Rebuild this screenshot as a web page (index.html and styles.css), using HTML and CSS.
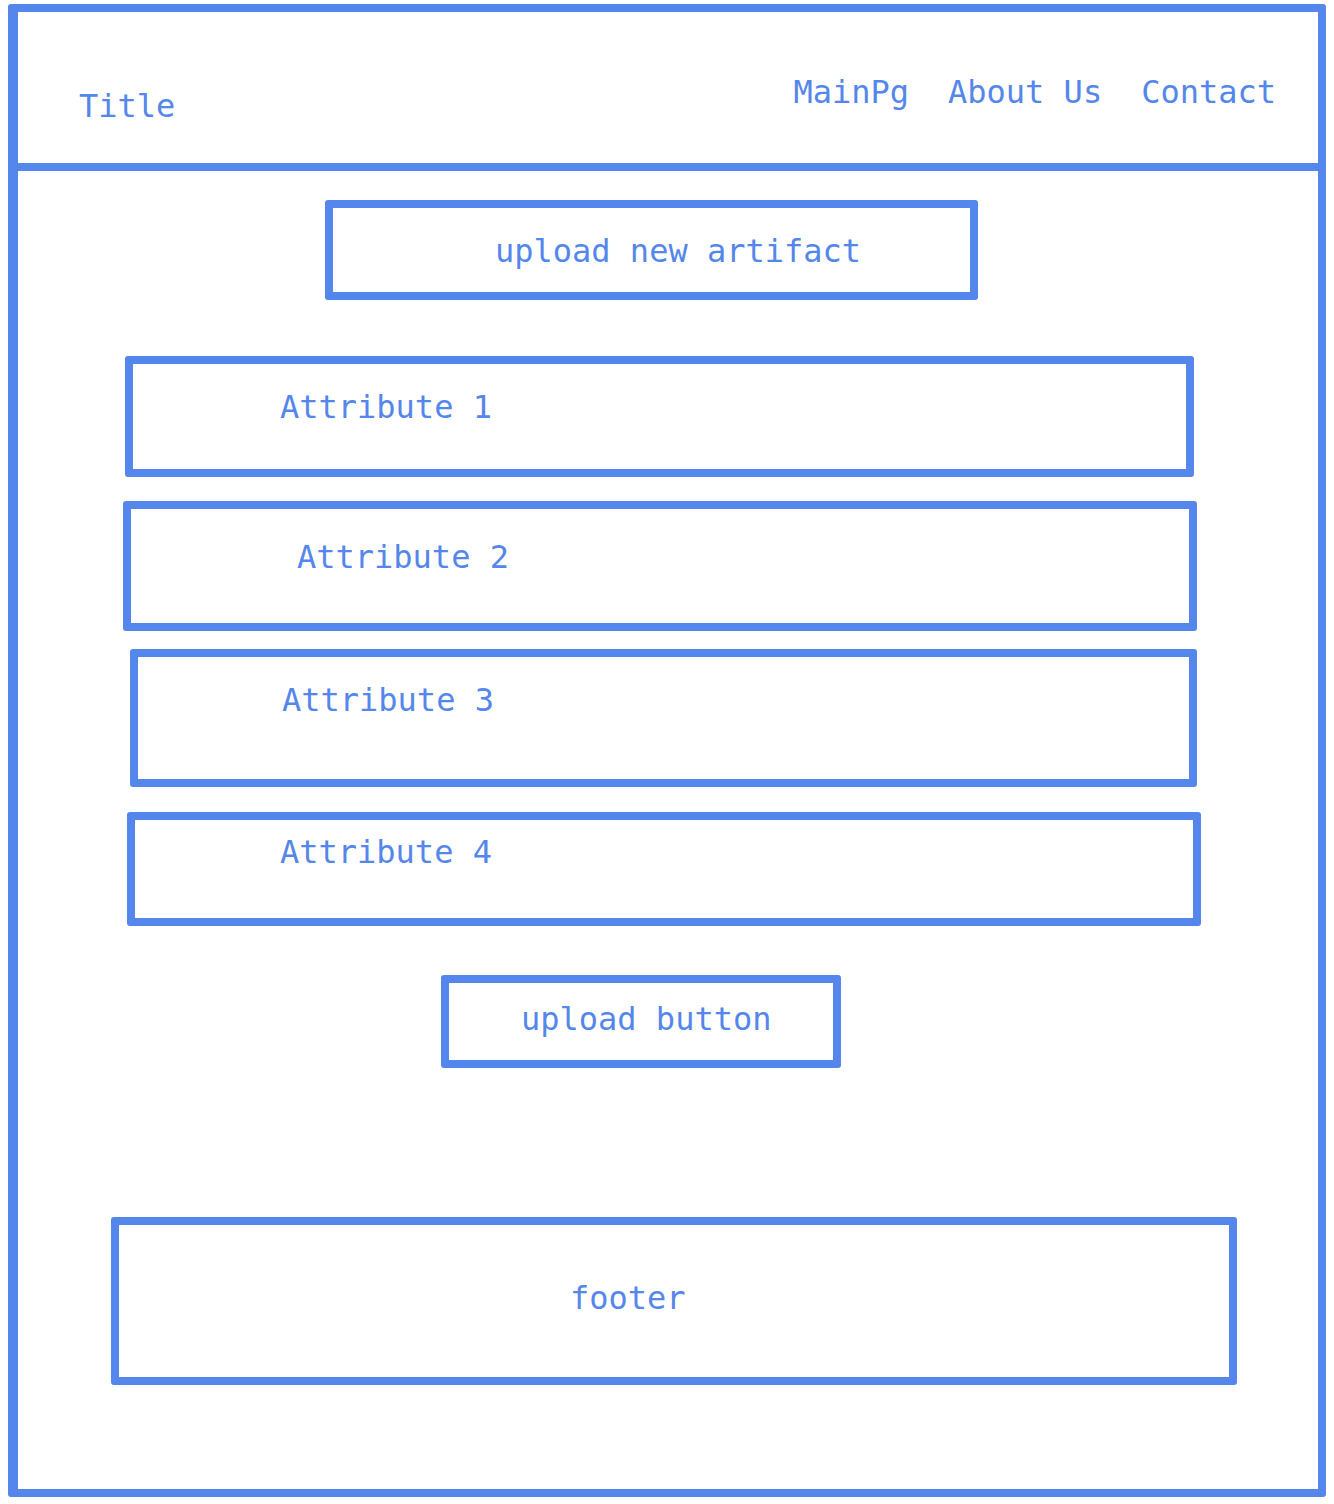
FILE: index.html
```html
<!DOCTYPE html>
<html lang="en">
<head>
<meta charset="utf-8">
<title>Upload artifact wireframe</title>
<link rel="stylesheet" href="styles.css">
</head>
<body>
<div class="frame">
  <header class="header">
    <div class="title">Title</div>
    <nav class="nav">
      <span class="nav-item">MainPg</span>
      <span class="nav-item">About Us</span>
      <span class="nav-item">Contact</span>
    </nav>
  </header>
  <main class="main">
    <div class="box box-artifact"><span class="label">upload new artifact</span></div>
    <div class="box box-attr1"><span class="label">Attribute 1</span></div>
    <div class="box box-attr2"><span class="label">Attribute 2</span></div>
    <div class="box box-attr3"><span class="label">Attribute 3</span></div>
    <div class="box box-attr4"><span class="label">Attribute 4</span></div>
    <div class="box box-button"><span class="label">upload button</span></div>
    <div class="box box-footer"><span class="label">footer</span></div>
  </main>
</div>
</body>
</html>
```
FILE: styles.css
```css
* { box-sizing: border-box; }
html, body { margin: 0; padding: 0; background: #ffffff; }
body {
  font-family: "DejaVu Sans Mono", "Liberation Mono", monospace;
  font-size: 32px;
  line-height: 40px;
  color: #5486ec;
}
.frame {
  margin: 4px 0 0 8px;
  width: 1318px;
  height: 1493px;
  border: 8px solid #5486ec;
  border-left-width: 10px;
  border-radius: 3px;
  display: flex;
  flex-direction: column;
}
.header {
  height: 159px;
  border-bottom: 8px solid #5486ec;
  display: flex;
  justify-content: space-between;
  align-items: flex-start;
  padding: 0 42px 0 61px;
}
.title { margin-top: 74px; }
.nav { display: flex; gap: 39px; margin-top: 60px; }
.main {
  display: flex;
  flex-direction: column;
  align-items: flex-start;
}
.box {
  border: 8px solid #5486ec;
  border-radius: 3px;
  display: flex;
  align-items: flex-start;
}
.label { white-space: pre; }
.box-artifact { margin: 29px 0 0 307px; width: 653px; height: 100px; padding: 23px 0 0 162px; }
.box-attr1 { margin: 56px 0 0 107px; width: 1069px; height: 121px; padding: 23px 0 0 147px; }
.box-attr2 { margin: 24px 0 0 105px; width: 1074px; height: 130px; padding: 28px 0 0 166px; }
.box-attr3 { margin: 18px 0 0 112px; width: 1067px; height: 138px; padding: 23px 0 0 144px; }
.box-attr4 { margin: 25px 0 0 109px; width: 1074px; height: 114px; padding: 12px 0 0 145px; }
.box-button { margin: 49px 0 0 423px; width: 400px; height: 93px; padding: 16px 0 0 72px; }
.box-footer { margin: 149px 0 0 93px; width: 1126px; height: 168px; padding: 53px 0 0 451px; }
```
